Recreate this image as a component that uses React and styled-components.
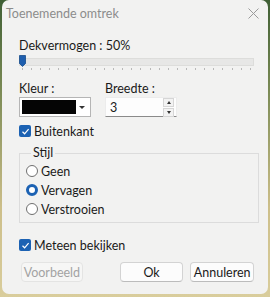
import React from "react";
import styled, { createGlobalStyle } from "styled-components";

const Global = createGlobalStyle`
  html, body { margin: 0; padding: 0; }
  body {
    width: 270px; height: 297px; overflow: hidden;
    background: linear-gradient(180deg, #3f5f34 0%, #7a8a55 30%, #cdbf8a 70%, #d9cd9c 100%);
    font-family: Lato, "Open Sans", sans-serif;
    font-size: 12.5px;
    color: #1a1a1a;
  }
`;

const Window = styled.div`
  box-sizing: border-box;
  width: 266px;
  height: 294px;
  margin-left: 2px;
  background: #f2f2f1;
  border-radius: 7px;
  display: flex;
  flex-direction: column;
  overflow: hidden;
`;

const TitleBar = styled.div`
  height: 26px;
  display: flex;
  align-items: center;
  justify-content: space-between;
  padding: 0 6px 0 4px;
  color: #8c8c8c;
  font-size: 12.5px;
`;

const Close = styled.svg`
  width: 11px;
  height: 11px;
  margin-right: 3px;
`;

const Body = styled.div`
  padding: 0 14px 0 17px;
  display: flex;
  flex-direction: column;
`;

const Label = styled.div`
  line-height: 16px;
  margin-top: ${(p) => p.$mt || 0}px;
`;

const SliderWrap = styled.div`
  position: relative;
  height: 16px;
  margin-top: 1px;
`;

const Track = styled.div`
  position: absolute;
  left: 0;
  right: 0;
  top: 3px;
  height: 6px;
  background: #e7e7e6;
  border: 1px solid #dddddb;
`;

const Thumb = styled.svg`
  position: absolute;
  left: 0;
  top: 0;
  width: 7px;
  height: 12px;
`;

const Ticks = styled.div`
  position: absolute;
  left: 3px;
  right: 3px;
  top: 13px;
  height: 3px;
  display: flex;
  justify-content: space-between;
`;

const Tick = styled.span`
  width: 1px;
  height: 2px;
  background: #b8b8b8;
`;

const Row = styled.div`
  display: flex;
  gap: 14px;
  margin-top: 10px;
`;

const Field = styled.div`
  display: flex;
  flex-direction: column;
`;

const Combo = styled.div`
  box-sizing: border-box;
  width: 72px;
  height: 20px;
  border: 1px solid #b5b5b5;
  background: #fff;
  display: flex;
  align-items: center;
  padding: 2px;
`;

const Swatch = styled.div`
  width: 54px;
  height: 100%;
  background: #050505;
`;

const Arrow = styled.div`
  flex: 1;
  display: flex;
  justify-content: center;
  &::after {
    content: "";
    border-left: 3px solid transparent;
    border-right: 3px solid transparent;
    border-top: 3px solid #333;
  }
`;

const Spin = styled.div`
  box-sizing: border-box;
  width: 72px;
  height: 20px;
  background: #fdfdfd;
  border: 1px solid #ececec;
  border-bottom: 1px solid #8a8a8a;
  display: flex;
  align-items: center;
  padding-left: 4px;
`;

const SpinText = styled.span`
  flex: 1;
`;

const SpinButtons = styled.div`
  display: flex;
  flex-direction: column;
  gap: 1px;
  margin-right: 2px;
`;

const SpinBtn = styled.div`
  width: 9px;
  height: 7px;
  background: #f3f3f3;
  border: 1px solid #d6d6d6;
  display: flex;
  align-items: center;
  justify-content: center;
  &::after {
    content: "";
    border-left: 2.5px solid transparent;
    border-right: 2.5px solid transparent;
    ${(p) => (p.$up ? "border-bottom: 3px solid #333;" : "border-top: 3px solid #333;")}
  }
`;

const CheckRow = styled.label`
  display: flex;
  align-items: center;
  gap: 3px;
  height: 16px;
  margin-top: ${(p) => p.$mt || 0}px;
`;

const CheckBox = styled.span`
  width: 12px;
  height: 12px;
  border-radius: 2px;
  background: #1c62b3;
  display: flex;
  align-items: center;
  justify-content: center;
`;

const Group = styled.fieldset`
  box-sizing: border-box;
  margin: 7px 0 0 0;
  padding: 3px 0 5px 6px;
  width: 240px;
  border: 1px solid #dcdcdc;
  display: flex;
  flex-direction: column;
  gap: 3px;
`;

const Legend = styled.legend`
  padding: 0 2px;
  margin-left: 5px;
  line-height: 14px;
`;

const RadioRow = styled.label`
  display: flex;
  align-items: center;
  gap: 3px;
  height: 16px;
`;

const Radio = styled.span`
  box-sizing: border-box;
  width: 12px;
  height: 12px;
  border-radius: 50%;
  border: ${(p) => (p.$on ? "3.5px solid #1c62b3" : "1px solid #6f6f6f")};
  background: #fff;
`;

const Buttons = styled.div`
  display: flex;
  margin-top: 9px;
  padding-left: 2px;
`;

const Button = styled.button`
  box-sizing: border-box;
  height: 20px;
  width: ${(p) => p.$w}px;
  margin-left: ${(p) => p.$ml || 0}px;
  border-radius: 4px;
  font: inherit;
  padding: 0;
  background: ${(p) => (p.disabled ? "#f6f6f5" : "#fcfcfc")};
  color: ${(p) => (p.disabled ? "#a3a3a3" : "#1a1a1a")};
  border: 1px solid ${(p) => (p.disabled ? "#e4e4e3" : "#d3d3d3")};
  border-bottom-color: ${(p) => (p.disabled ? "#e4e4e3" : "#bcbcbc")};
`;

const Check = () => (
  <svg width="9" height="9" viewBox="0 0 9 9">
    <path d="M1.5 4.8 L3.6 6.8 L7.6 2.2" fill="none" stroke="#fff" strokeWidth="1.2" />
  </svg>
);

export default function App() {
  const ticks = Array.from({ length: 26 });
  return (
    <>
      <Global />
      <Window>
        <TitleBar>
          <span>Toenemende omtrek</span>
          <Close viewBox="0 0 11 11">
            <path d="M0.5 0.5 L10.5 10.5 M10.5 0.5 L0.5 10.5" stroke="#9a9a9a" strokeWidth="1" />
          </Close>
        </TitleBar>
        <Body>
          <Label $mt={12}>Dekvermogen : 50%</Label>
          <SliderWrap>
            <Track />
            <Thumb viewBox="0 0 7 12">
              <path d="M0.5 0.5 H6.5 V8.5 L3.5 11.5 L0.5 8.5 Z" fill="#1f5fae" stroke="#174c8c" strokeWidth="0.8" />
            </Thumb>
            <Ticks>
              {ticks.map((_, i) => (
                <Tick key={i} />
              ))}
            </Ticks>
          </SliderWrap>
          <Row>
            <Field>
              <Label>Kleur :</Label>
              <Combo>
                <Swatch />
                <Arrow />
              </Combo>
            </Field>
            <Field>
              <Label>Breedte :</Label>
              <Spin>
                <SpinText>3</SpinText>
                <SpinButtons>
                  <SpinBtn $up />
                  <SpinBtn />
                </SpinButtons>
              </Spin>
            </Field>
          </Row>
          <CheckRow $mt={6}>
            <CheckBox>
              <Check />
            </CheckBox>
            Buitenkant
          </CheckRow>
          <Group>
            <Legend>Stijl</Legend>
            <RadioRow>
              <Radio />
              Geen
            </RadioRow>
            <RadioRow>
              <Radio $on />
              Vervagen
            </RadioRow>
            <RadioRow>
              <Radio />
              Verstrooien
            </RadioRow>
          </Group>
          <CheckRow $mt={14}>
            <CheckBox>
              <Check />
            </CheckBox>
            Meteen bekijken
          </CheckRow>
          <Buttons>
            <Button disabled $w={63}>Voorbeeld</Button>
            <Button $w={65} $ml={37}>Ok</Button>
            <Button $w={65} $ml={7}>Annuleren</Button>
          </Buttons>
        </Body>
      </Window>
    </>
  );
}
